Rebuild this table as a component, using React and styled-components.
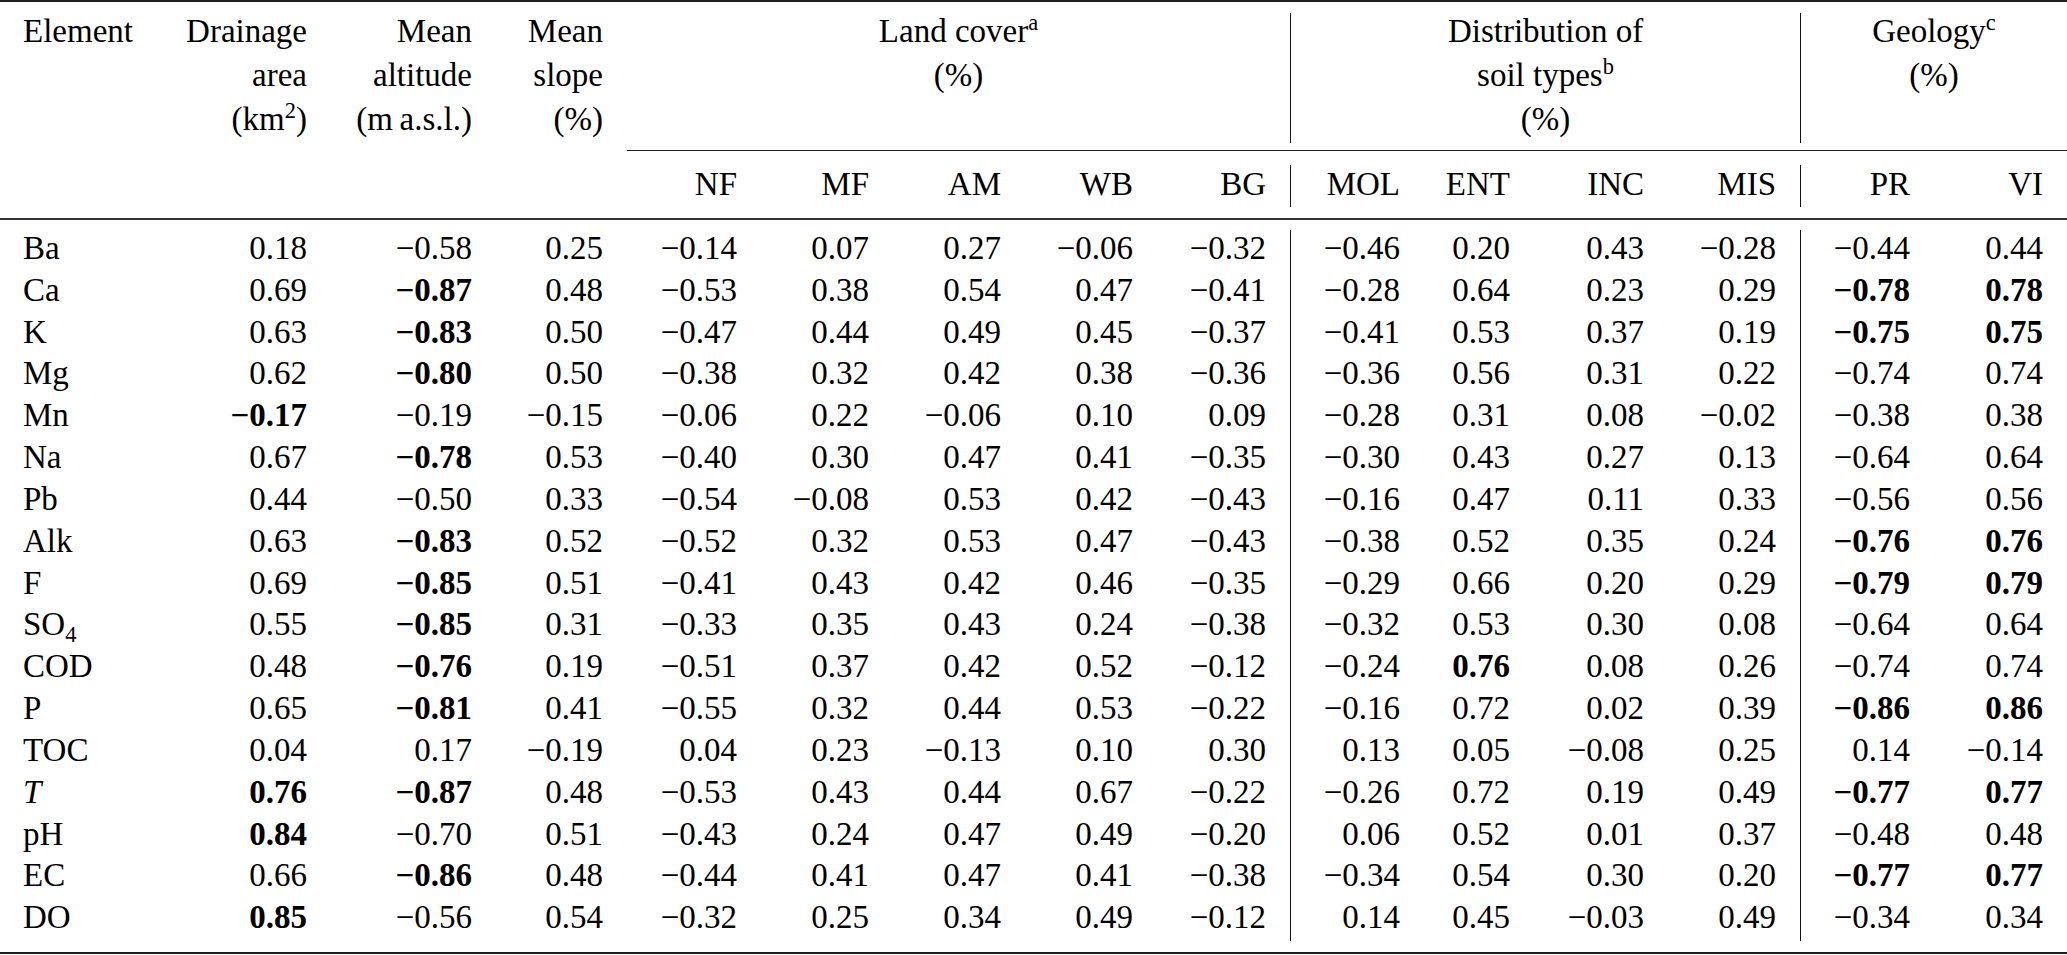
import React from "react";
import styled, { createGlobalStyle, css } from "styled-components";

const GlobalStyle = createGlobalStyle`
  html, body {
    margin: 0;
    padding: 0;
    background: #ffffff;
    overflow: hidden;
  }
  body {
    font-family: "Liberation Serif", "Times New Roman", Times, serif;
    color: #000000;
  }
`;

const COLS =
  "160px 171px 165px 131px 134px 132px 132px 132px 133px 134px 110px 134px 132px 134px 133px";

const Page = styled.div`
  width: 2067px;
  font-size: 33px;
`;

const Rule = styled.div`
  height: ${(p) => p.$h || 2}px;
  background: ${(p) => p.$color || "#222"};
`;

const HeadGrid = styled.div`
  display: grid;
  grid-template-columns: ${COLS};
  grid-template-rows: auto auto;
`;

const StubHead = styled.div`
  grid-row: 1 / span 2;
  padding-top: 7px;
  line-height: 44px;
  text-align: ${(p) => (p.$left ? "left" : "right")};
  padding-left: ${(p) => (p.$left ? "23px" : "0")};
  padding-right: ${(p) => (p.$left ? "0" : "24px")};
`;

const GroupHead = styled.div`
  grid-column: ${(p) => p.$cols};
  grid-row: 1;
  display: flex;
  flex-direction: column;
  padding: 11px 0 7px;
  border-bottom: 1px solid #222;
`;

const GroupInner = styled.div`
  flex: 1;
  padding-bottom: 2px;
  text-align: center;
  ${(p) =>
    p.$ruled &&
    css`
      border-left: 1px solid #111;
    `}
`;

const GroupText = styled.div`
  margin-top: -4px;
  line-height: 44px;
`;

const SubHead = styled.div`
  grid-row: 2;
  margin: 14px 0 11px;
  padding: 1px 24px 5px 0;
  line-height: 36px;
  text-align: right;
  ${(p) =>
    p.$ruled &&
    css`
      border-left: 1px solid #111;
    `}
`;

const BodyGrid = styled.div`
  display: grid;
  grid-template-columns: ${COLS};
  grid-auto-rows: 41.83px;
  padding: 10px 0 11px;
`;

const Cell = styled.div`
  line-height: 36px;
  text-align: right;
  padding-right: 24px;
  white-space: nowrap;
  font-weight: ${(p) => (p.$bold ? 700 : 400)};
  ${(p) =>
    p.$ruled &&
    css`
      border-left: 1px solid #111;
    `}
`;

const StubCell = styled.div`
  line-height: 36px;
  text-align: left;
  padding-left: 23px;
  white-space: nowrap;
`;

const Sup = styled.sup`
  font-size: 0.68em;
  line-height: 0;
  vertical-align: 0.52em;
`;

const Sub = styled.sub`
  font-size: 0.68em;
  line-height: 0;
  vertical-align: -0.32em;
`;

const Ital = styled.i`
  font-style: italic;
`;

const rows = [
  ["Ba", "0.18 -0.58 0.25 -0.14 0.07 0.27 -0.06 -0.32 -0.46 0.20 0.43 -0.28 -0.44 0.44"],
  ["Ca", "0.69 *-0.87 0.48 -0.53 0.38 0.54 0.47 -0.41 -0.28 0.64 0.23 0.29 *-0.78 *0.78"],
  ["K", "0.63 *-0.83 0.50 -0.47 0.44 0.49 0.45 -0.37 -0.41 0.53 0.37 0.19 *-0.75 *0.75"],
  ["Mg", "0.62 *-0.80 0.50 -0.38 0.32 0.42 0.38 -0.36 -0.36 0.56 0.31 0.22 -0.74 0.74"],
  ["Mn", "*-0.17 -0.19 -0.15 -0.06 0.22 -0.06 0.10 0.09 -0.28 0.31 0.08 -0.02 -0.38 0.38"],
  ["Na", "0.67 *-0.78 0.53 -0.40 0.30 0.47 0.41 -0.35 -0.30 0.43 0.27 0.13 -0.64 0.64"],
  ["Pb", "0.44 -0.50 0.33 -0.54 -0.08 0.53 0.42 -0.43 -0.16 0.47 0.11 0.33 -0.56 0.56"],
  ["Alk", "0.63 *-0.83 0.52 -0.52 0.32 0.53 0.47 -0.43 -0.38 0.52 0.35 0.24 *-0.76 *0.76"],
  ["F", "0.69 *-0.85 0.51 -0.41 0.43 0.42 0.46 -0.35 -0.29 0.66 0.20 0.29 *-0.79 *0.79"],
  ["SO4", "0.55 *-0.85 0.31 -0.33 0.35 0.43 0.24 -0.38 -0.32 0.53 0.30 0.08 -0.64 0.64"],
  ["COD", "0.48 *-0.76 0.19 -0.51 0.37 0.42 0.52 -0.12 -0.24 *0.76 0.08 0.26 -0.74 0.74"],
  ["P", "0.65 *-0.81 0.41 -0.55 0.32 0.44 0.53 -0.22 -0.16 0.72 0.02 0.39 *-0.86 *0.86"],
  ["TOC", "0.04 0.17 -0.19 0.04 0.23 -0.13 0.10 0.30 0.13 0.05 -0.08 0.25 0.14 -0.14"],
  ["T", "*0.76 *-0.87 0.48 -0.53 0.43 0.44 0.67 -0.22 -0.26 0.72 0.19 0.49 *-0.77 *0.77"],
  ["pH", "*0.84 -0.70 0.51 -0.43 0.24 0.47 0.49 -0.20 0.06 0.52 0.01 0.37 -0.48 0.48"],
  ["EC", "0.66 *-0.86 0.48 -0.44 0.41 0.47 0.41 -0.38 -0.34 0.54 0.30 0.20 *-0.77 *0.77"],
  ["DO", "*0.85 -0.56 0.54 -0.32 0.25 0.34 0.49 -0.12 0.14 0.45 -0.03 0.49 -0.34 0.34"],
];

const renderLabel = (name) => {
  if (name === "SO4")
    return (
      <>
        SO<Sub>4</Sub>
      </>
    );
  if (name === "T") return <Ital>T</Ital>;
  return name;
};

const subHeads = ["NF", "MF", "AM", "WB", "BG", "MOL", "ENT", "INC", "MIS", "PR", "VI"];

export default function App() {
  return (
    <Page>
      <GlobalStyle />
      <Rule $h={2} $color="#1e1e1e" />
      <HeadGrid>
        <StubHead $left>Element</StubHead>
        <StubHead>
          Drainage
          <br />
          area
          <br />
          (km<Sup>2</Sup>)
        </StubHead>
        <StubHead>
          Mean
          <br />
          altitude
          <br />
          (m{"\u2009"}a.s.l.)
        </StubHead>
        <StubHead>
          Mean
          <br />
          slope
          <br />
          (%)
        </StubHead>
        <GroupHead $cols="5 / span 5">
          <GroupInner>
            <GroupText>
              Land cover<Sup>a</Sup>
              <br />
              (%)
            </GroupText>
          </GroupInner>
        </GroupHead>
        <GroupHead $cols="10 / span 4">
          <GroupInner $ruled>
            <GroupText>
              Distribution of
              <br />
              soil types<Sup>b</Sup>
              <br />
              (%)
            </GroupText>
          </GroupInner>
        </GroupHead>
        <GroupHead $cols="14 / span 2">
          <GroupInner $ruled>
            <GroupText>
              Geology<Sup>c</Sup>
              <br />
              (%)
            </GroupText>
          </GroupInner>
        </GroupHead>
        {subHeads.map((s, i) => (
          <SubHead key={s} $ruled={i === 5 || i === 9} style={{ gridColumn: i + 5 }}>
            {s}
          </SubHead>
        ))}
      </HeadGrid>
      <Rule $h={2} $color="#333" />
      <BodyGrid>
        {rows.map(([name, vals]) => (
          <React.Fragment key={name}>
            <StubCell>{renderLabel(name)}</StubCell>
            {vals.split(" ").map((v, i) => {
              const bold = v.startsWith("*");
              const txt = v.replace("*", "").replace("-", "\u2212");
              return (
                <Cell key={i} $bold={bold} $ruled={i === 8 || i === 12}>
                  {txt}
                </Cell>
              );
            })}
          </React.Fragment>
        ))}
      </BodyGrid>
      <Rule $h={2} $color="#1e1e1e" />
    </Page>
  );
}
